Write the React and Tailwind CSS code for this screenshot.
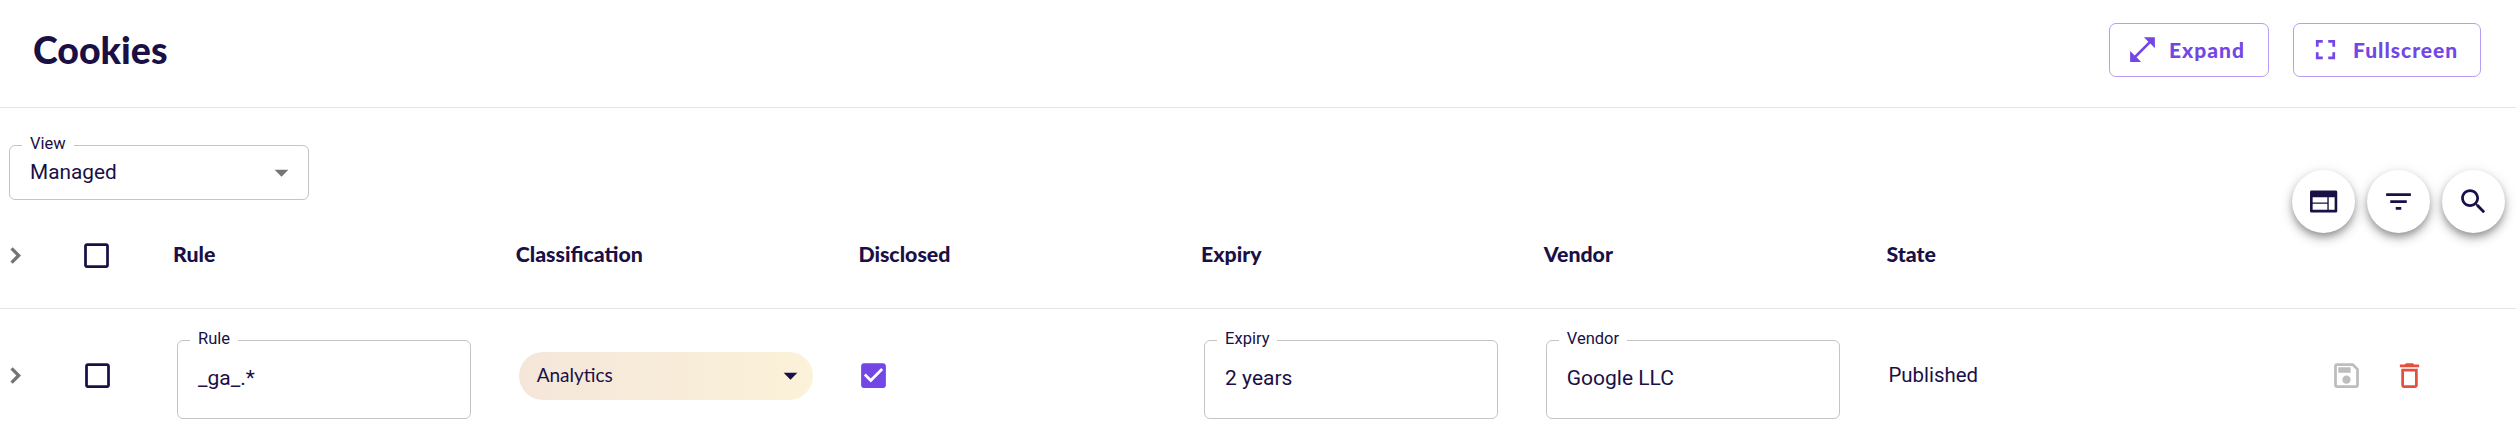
const P = {
  full: "M21 11V3h-8l3.29 3.29-10 10L3 13v8h8l-3.29-3.29 10-10z",
  screen: "M7 14H5v5h5v-2H7v-3zm-2-4h2V7h3V5H5v5zm12 7h-3v2h5v-5h-2v3zM14 5v2h3v3h2V5h-5z",
  table: "M3.2 4h17.8a1 1 0 0 1 1 1v14a1 1 0 0 1-1 1H3.2a1 1 0 0 1-1-1V5a1 1 0 0 1 1-1zM4.1 8.85v3.85h10.7V8.85zM4.1 13.7V18h10.7v-4.3zM15.8 8.85V18h4.3V8.85z",
  filter: "M10 18h4v-2h-4v2zM3 6v2h18V6H3zm3 7h12v-2H6v2z",
  search: "M15.5 14h-.79l-.28-.27C15.41 12.59 16 11.11 16 9.5 16 5.91 13.09 3 9.5 3S3 5.91 3 9.5 5.91 16 9.5 16c1.61 0 3.09-.59 4.23-1.57l.27.28v.79l5 4.99L20.49 19l-4.99-5zm-6 0C7.01 14 5 11.99 5 9.5S7.01 5 9.5 5 14 7.01 14 9.5 11.99 14 9.5 14z",
  blank: "M19 5v14H5V5h14m0-2H5c-1.1 0-2 .9-2 2v14c0 1.1.9 2 2 2h14c1.1 0 2-.9 2-2V5c0-1.1-.9-2-2-2z",
  checked: "M19 3H5c-1.11 0-2 .9-2 2v14c0 1.1.89 2 2 2h14c1.11 0 2-.9 2-2V5c0-1.1-.89-2-2-2zm-9 14l-5-5 1.41-1.41L10 14.17l7.59-7.59L19 8l-9 9z",
  chevron: "M10 6L8.3 7.7 12.6 12l-4.3 4.3L10 18l6-6z",
  caret: "M7 10l5 5 5-5z",
  save: "M17 3H5c-1.11 0-2 .9-2 2v14c0 1.1.89 2 2 2h14c1.1 0 2-.9 2-2V7l-4-4zm2 16H5V5h11.17L19 7.83V19zm-7-7c-1.66 0-3 1.34-3 3s1.34 3 3 3 3-1.34 3-3-1.34-3-3-3zM6 6h9v4H6z",
  trash: "M6 19c0 1.1.9 2 2 2h8c1.1 0 2-.9 2-2V7H6v12zM8 9h8v10H8V9zm7.5-5l-1-1h-5l-1 1H5v2h14V4z",
};

function Icon({ d, className = "" }) {
  return (
    <svg viewBox="0 0 24 24" fill="currentColor" fillRule="evenodd" className={`w-[33px] h-[33px] shrink-0 ${className}`}>
      <path d={d} />
    </svg>
  );
}

function OutlineButton({ icon, label, className }) {
  return (
    <button className={`h-[54px] flex items-center border border-[#b59cf5] rounded-[7px] text-[#7247e6] font-['Lato'] font-black text-[21px] tracking-[1px] ${className}`}>
      <Icon d={icon} />
      <span>{label}</span>
    </button>
  );
}

function Fab({ d }) {
  return (
    <button className="w-[63px] h-[63px] rounded-full bg-white flex items-center justify-center text-[#1a1046] shadow-[0_4px_7px_-1px_rgba(0,0,0,0.28),0_6px_12px_0_rgba(0,0,0,0.18),0_2px_16px_0_rgba(0,0,0,0.08)]">
      <Icon d={d} />
    </button>
  );
}

function Field({ label, value }) {
  return (
    <div className="relative mt-[7px] w-[294px] h-[79px] border border-[#c4c4c4] rounded-[6px] flex items-center pl-[20px] text-[21px]">
      <span className="absolute left-[12px] top-[-13px] bg-white px-[8px] text-[16.5px] leading-[22px]">{label}</span>
      <span>{value}</span>
    </div>
  );
}

const cols = "grid grid-cols-[32px_130px_342.7px_342.7px_342.7px_342.7px_342.7px_342.7px_1fr]";

export default function App() {
  return (
    <div className="w-full min-h-[442px] bg-white text-[#1a1046] font-['Roboto',sans-serif]">
      <header className="h-[108px] border-b border-[#e5e5e5] flex items-center justify-between pl-[33px] pr-[35px]">
        <h1 className="font-['Lato',sans-serif] font-black text-[37.5px] leading-none mt-[-7px]">Cookies</h1>
        <div className="flex gap-[24px] mt-[-8px]">
          <OutlineButton icon={P.full} label="Expand" className="w-[160px] pl-[16px] gap-[10px]" />
          <OutlineButton icon={P.screen} label="Fullscreen" className="w-[188px] pl-[15px] gap-[11px]" />
        </div>
      </header>

      <section className="h-[124px] flex justify-between">
        <div className="pl-[9px] pt-[37px]">
          <div className="relative w-[300px] h-[55px] border border-[#c4c4c4] rounded-[6px] flex items-center justify-between pl-[20px] pr-[10px] text-[20.8px]">
            <span className="absolute left-[12px] top-[-13px] bg-white px-[8px] text-[16.5px] leading-[22px]">View</span>
            <span>Managed</span>
            <Icon d={P.caret} className="text-[#757575]" />
          </div>
        </div>
        <div className="pr-[11px] pt-[62px] flex gap-[12px]">
          <Fab d={P.table} />
          <Fab d={P.filter} />
          <Fab d={P.search} />
        </div>
      </section>

      <div className="h-[77px] border-b border-[#e5e5e5]">
        <div className={`${cols} h-[46px] items-center font-['Lato',sans-serif] font-black text-[21.3px]`}>
          <Icon d={P.chevron} className="text-[#757575] -ml-[1px]" />
          <div className="flex justify-center -ml-[1px]"><Icon d={P.blank} /></div>
          {["Rule", "Classification", "Disclosed", "Expiry", "Vendor", "State"].map((h) => (
            <div key={h} className="pl-[11px]">{h}</div>
          ))}
        </div>
      </div>

      <div className={`${cols} h-[133px] items-center pr-[90px]`}>
        <Icon d={P.chevron} className="text-[#757575] -ml-[1px]" />
        <div className="flex justify-center"><Icon d={P.blank} /></div>
        <div className="pl-[15px]"><Field label="Rule" value="_ga_.*" /></div>
        <div className="pl-[14px]">
          <div className="w-[294px] h-[48px] rounded-full bg-gradient-to-r from-[#f5e6da] to-[#fbf2d8] flex items-center justify-between pl-[18px] pr-[6px] font-['Lato',sans-serif] text-[19px]">
            <span>Analytics</span>
            <Icon d={P.caret} />
          </div>
        </div>
        <div className="pl-[10px]"><Icon d={P.checked} className="text-[#7247e6]" /></div>
        <div className="pl-[14px]"><Field label="Expiry" value="2 years" /></div>
        <div className="pl-[13px]"><Field label="Vendor" value="Google LLC" /></div>
        <div className="pl-[13px] text-[20.4px]">Published</div>
        <div className="flex justify-end gap-[30px]">
          <Icon d={P.save} className="text-[#bdbdbd]" />
          <Icon d={P.trash} className="text-[#e54f3e]" />
        </div>
      </div>
    </div>
  );
}
